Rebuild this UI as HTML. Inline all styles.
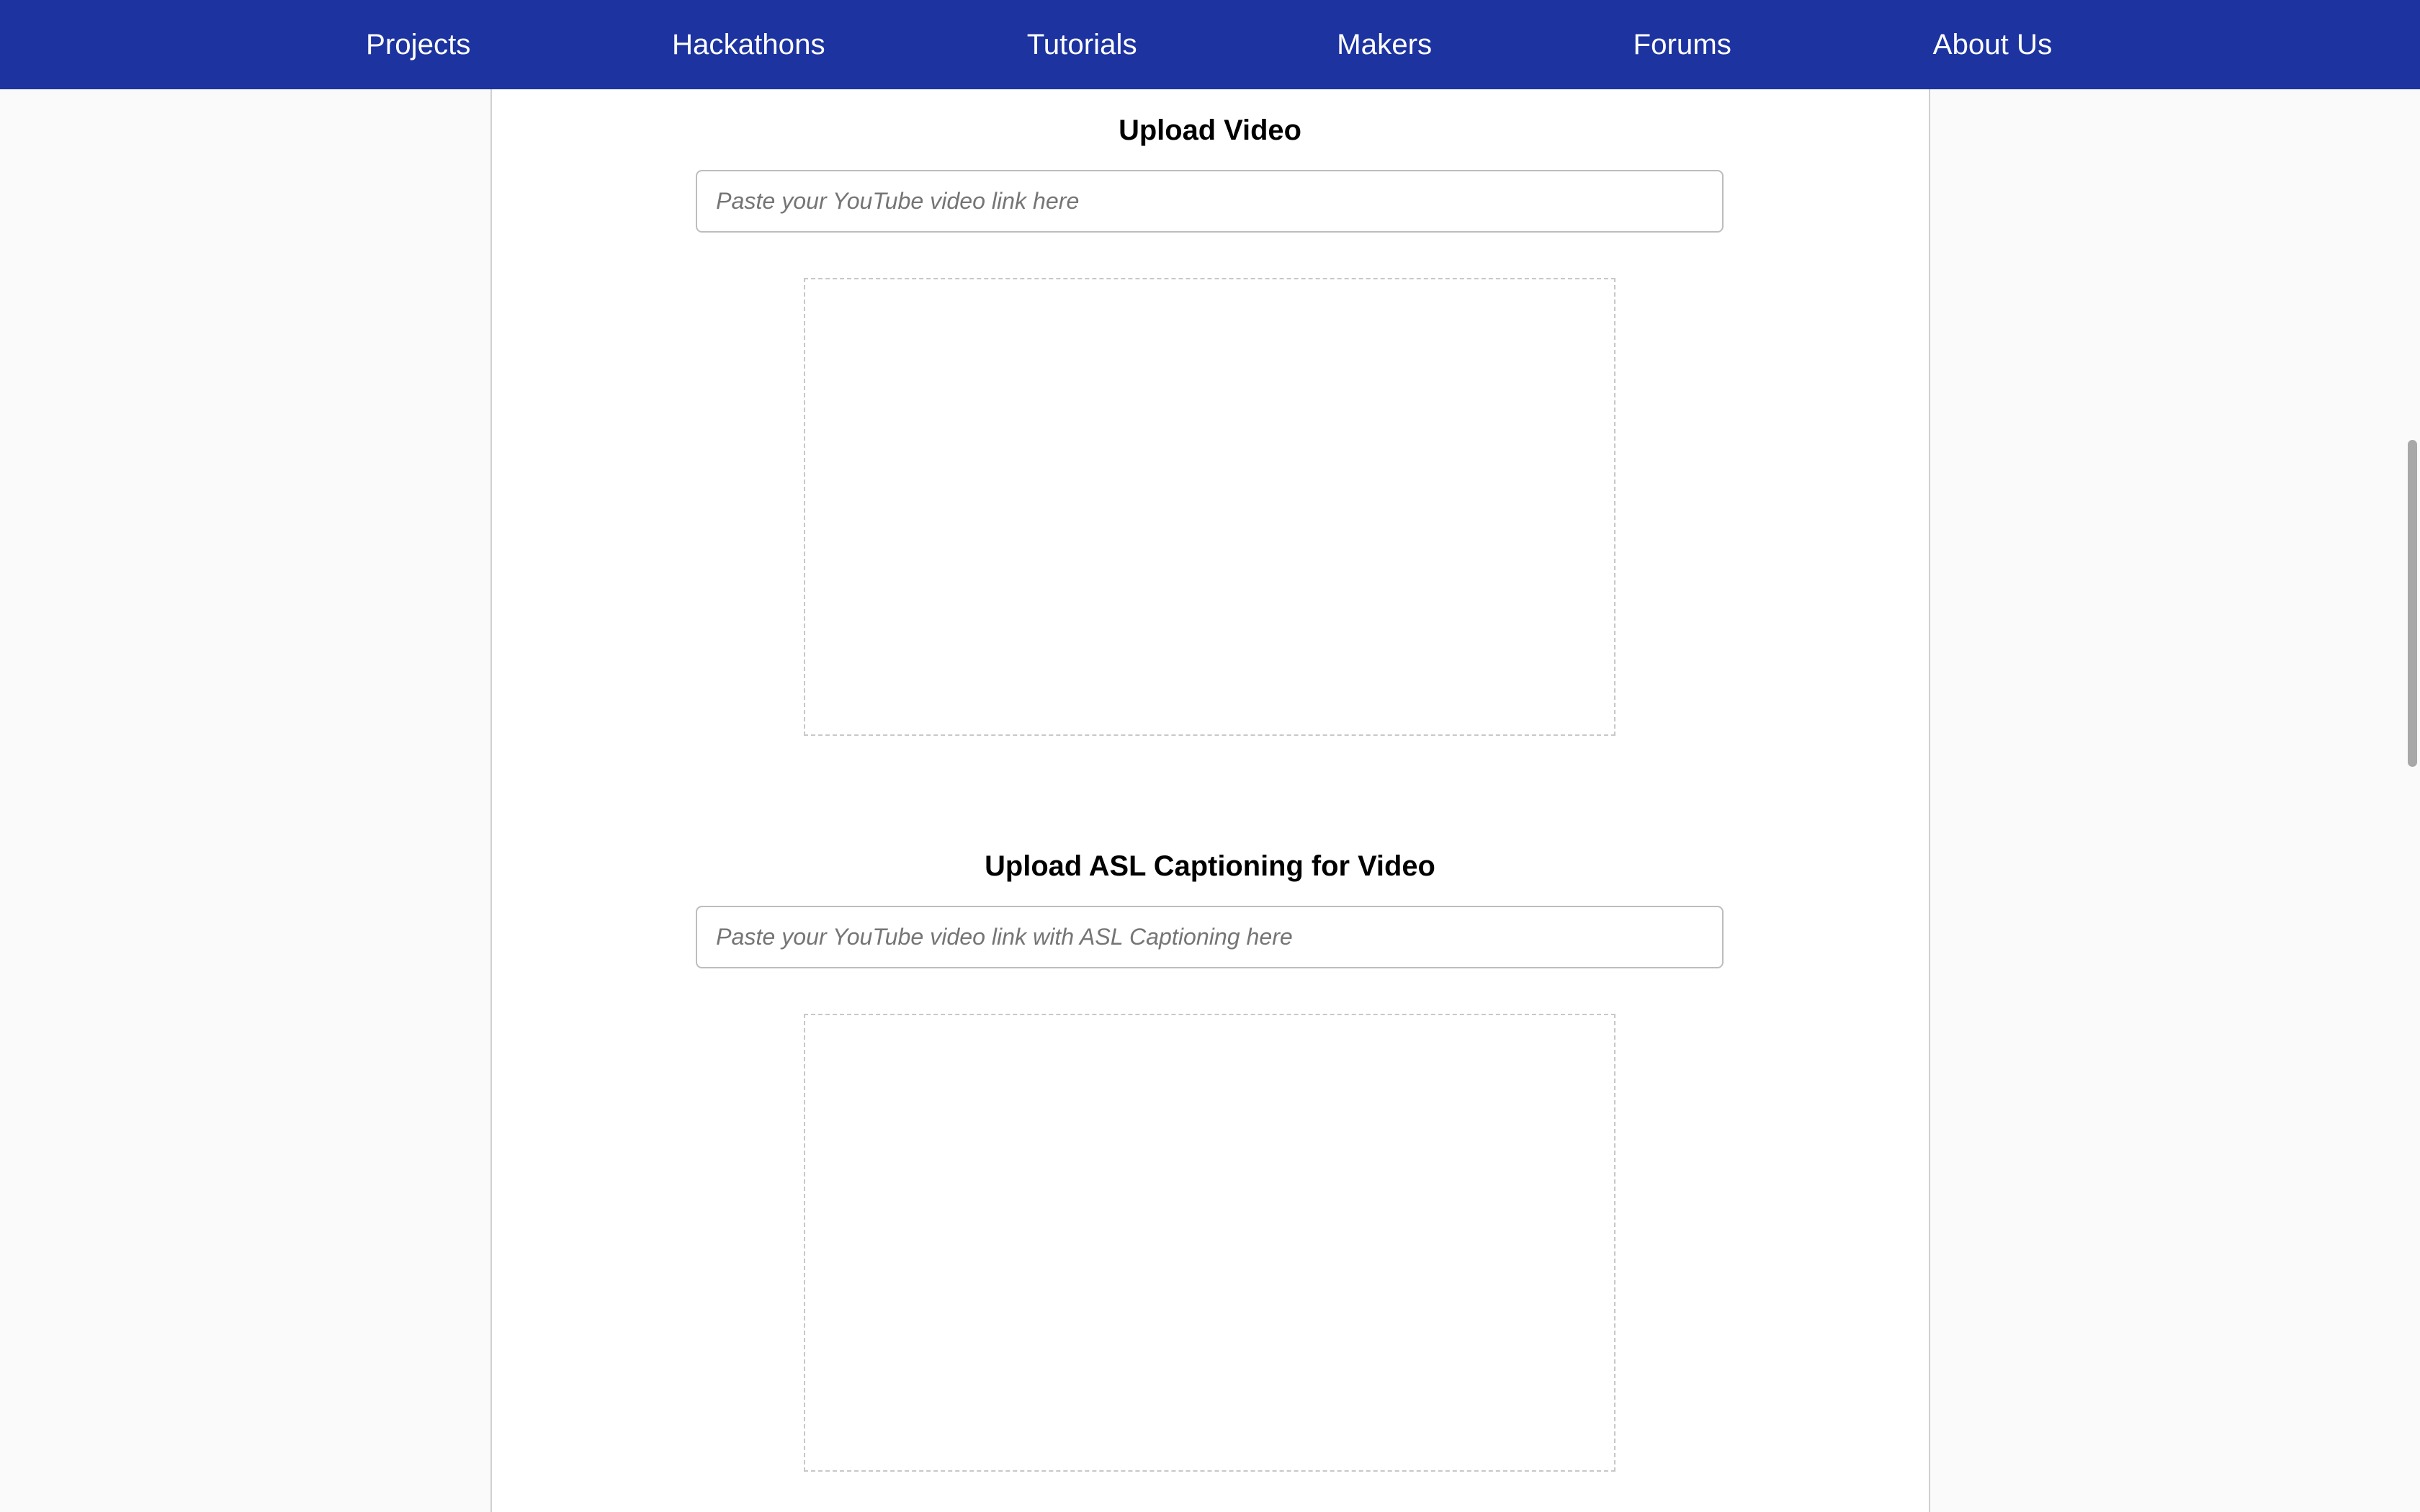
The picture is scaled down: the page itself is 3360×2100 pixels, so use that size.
<!DOCTYPE html>
<html><head><meta charset="utf-8"><style>
html{zoom:2.142857}
body{margin:0;width:1568px;height:980px;overflow:hidden;background:#fafafa;font-family:"Liberation Sans",Arial,sans-serif;position:relative}
.nav{position:absolute;left:0;top:0;width:1568px;height:58px;background:#1c33a0}
.nav span{position:absolute;top:18px;color:#fff;font-size:18.8px;transform:translateX(-50%);white-space:nowrap}
.panel{position:absolute;left:318px;top:58px;width:931px;height:922px;background:#fff;border-left:1px solid #d0d0d0;border-right:1px solid #d0d0d0}
h2{position:absolute;left:0;width:1568px;text-align:center;margin:0;font-size:18.6px;font-weight:bold;color:#000}
.inp{position:absolute;left:451px;width:664px;height:39px;border:1px solid #bdbdbd;border-radius:4px;background:#fff;box-sizing:content-box}
.inp span{position:absolute;left:12px;top:11px;font-size:15px;font-style:italic;color:#757575}
.box{position:absolute;left:521px;width:524px;height:295px;border:1px dashed #c8c8c8}
.thumb{position:absolute;left:1560px;top:285px;width:6px;height:212px;border-radius:3px;background:#a8a8a8}
</style></head><body>
<div class="nav">
<span style="left:271px">Projects</span>
<span style="left:485px">Hackathons</span>
<span style="left:701px">Tutorials</span>
<span style="left:897px">Makers</span>
<span style="left:1090px">Forums</span>
<span style="left:1291px">About Us</span>
</div>
<div class="panel"></div>
<h2 style="top:74px">Upload Video</h2>
<div class="inp" style="top:110px"><span>Paste your YouTube video link here</span></div>
<div class="box" style="top:180px"></div>
<h2 style="top:551px">Upload ASL Captioning for Video</h2>
<div class="inp" style="top:587px"><span>Paste your YouTube video link with ASL Captioning here</span></div>
<div class="box" style="top:657px"></div>
<div class="thumb"></div>
</body></html>
